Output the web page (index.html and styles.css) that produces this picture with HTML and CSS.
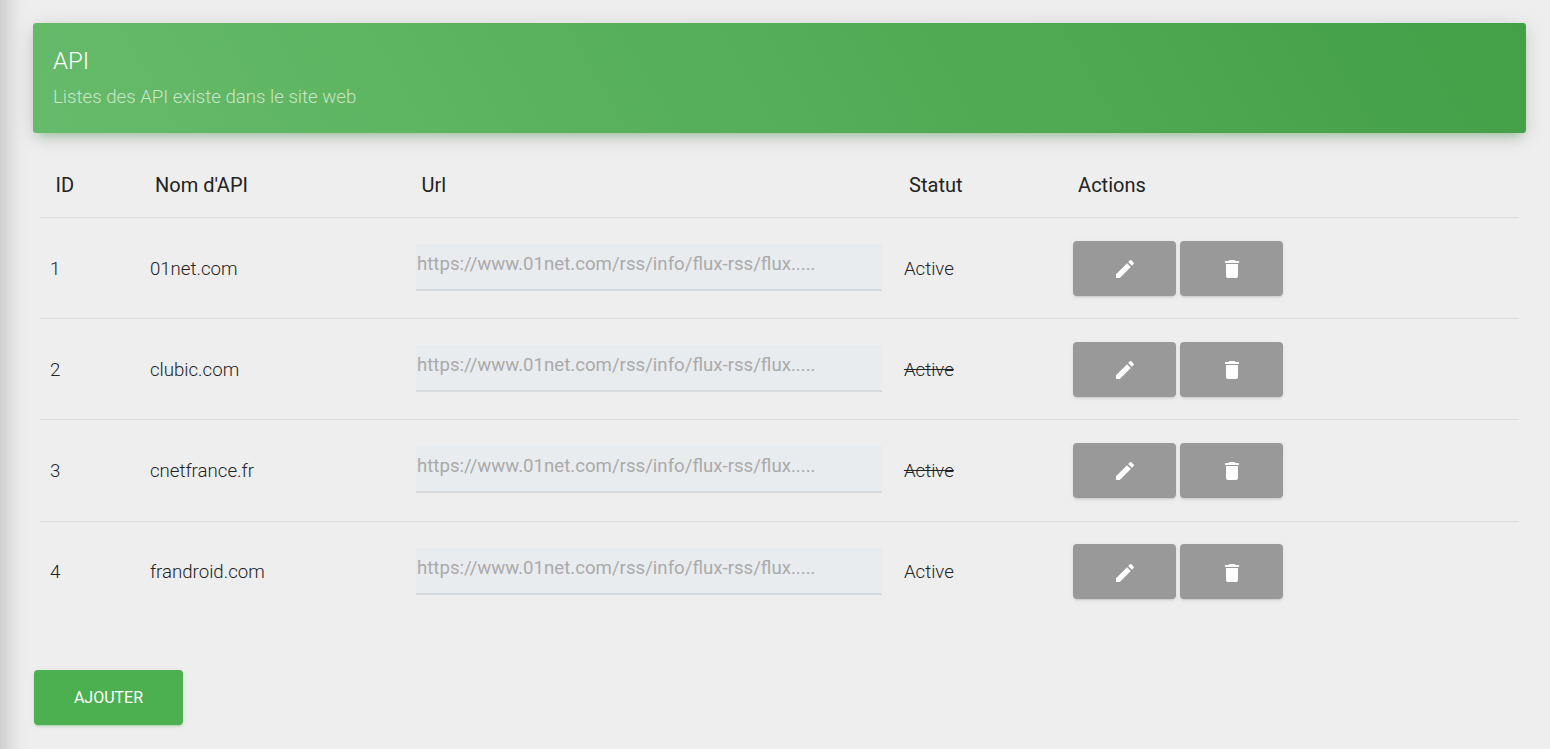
FILE: index.html
```html
<!DOCTYPE html>
<html lang="fr">
<head>
    <meta charset="UTF-8">
    <meta name="viewport" content="width=device-width, initial-scale=1.0">
    <title>API</title>
    <link rel="stylesheet" href="styles.css">
</head>
<body>
    <svg class="icon-defs" width="0" height="0" aria-hidden="true">
        <symbol id="icon-edit" viewBox="0 0 24 24"><path d="M3 17.25V21h3.75L17.81 9.94l-3.75-3.75L3 17.25zM20.71 7.04c.39-.39.39-1.02 0-1.41l-2.34-2.34c-.39-.39-1.02-.39-1.41 0l-1.83 1.83 3.75 3.75 1.83-1.83z"/></symbol>
        <symbol id="icon-delete" viewBox="0 0 24 24"><path d="M6 19c0 1.1.9 2 2 2h8c1.1 0 2-.9 2-2V7H6v12zM19 4h-3.5l-1-1h-5l-1 1H5v2h14V4z"/></symbol>
    </svg>
    <aside class="sidebar"></aside>
    <main class="content">
        <header class="card-header">
            <h1>API</h1>
            <p>Listes des API existe dans le site web</p>
        </header>
        <table class="api-table">
            <colgroup>
                <col class="col-id">
                <col class="col-name">
                <col class="col-url">
                <col class="col-status">
                <col>
            </colgroup>
            <thead>
                <tr>
                    <th>ID</th>
                    <th>Nom d'API</th>
                    <th>Url</th>
                    <th>Statut</th>
                    <th>Actions</th>
                </tr>
            </thead>
            <tbody>
                <tr>
                    <td class="cell-id">1</td>
                    <td>01net.com</td>
                    <td><input class="url-input" type="text" readonly value="https://www.01net.com/rss/info/flux-rss/flux....."></td>
                    <td>Active</td>
                    <td>
                        <div class="actions">
                            <button class="btn-action" type="button" aria-label="Modifier"><svg class="icon"><use href="#icon-edit"/></svg></button>
                            <button class="btn-action" type="button" aria-label="Supprimer"><svg class="icon"><use href="#icon-delete"/></svg></button>
                        </div>
                    </td>
                </tr>
                <tr>
                    <td class="cell-id">2</td>
                    <td>clubic.com</td>
                    <td><input class="url-input" type="text" readonly value="https://www.01net.com/rss/info/flux-rss/flux....."></td>
                    <td><s>Active</s></td>
                    <td>
                        <div class="actions">
                            <button class="btn-action" type="button" aria-label="Modifier"><svg class="icon"><use href="#icon-edit"/></svg></button>
                            <button class="btn-action" type="button" aria-label="Supprimer"><svg class="icon"><use href="#icon-delete"/></svg></button>
                        </div>
                    </td>
                </tr>
                <tr>
                    <td class="cell-id">3</td>
                    <td>cnetfrance.fr</td>
                    <td><input class="url-input" type="text" readonly value="https://www.01net.com/rss/info/flux-rss/flux....."></td>
                    <td><s>Active</s></td>
                    <td>
                        <div class="actions">
                            <button class="btn-action" type="button" aria-label="Modifier"><svg class="icon"><use href="#icon-edit"/></svg></button>
                            <button class="btn-action" type="button" aria-label="Supprimer"><svg class="icon"><use href="#icon-delete"/></svg></button>
                        </div>
                    </td>
                </tr>
                <tr>
                    <td class="cell-id">4</td>
                    <td>frandroid.com</td>
                    <td><input class="url-input" type="text" readonly value="https://www.01net.com/rss/info/flux-rss/flux....."></td>
                    <td>Active</td>
                    <td>
                        <div class="actions">
                            <button class="btn-action" type="button" aria-label="Modifier"><svg class="icon"><use href="#icon-edit"/></svg></button>
                            <button class="btn-action" type="button" aria-label="Supprimer"><svg class="icon"><use href="#icon-delete"/></svg></button>
                        </div>
                    </td>
                </tr>
            </tbody>
        </table>
        <button class="btn-add" type="button">Ajouter</button>
    </main>
</body>
</html>
```
FILE: styles.css
```css
html, body {
    height: 100%;
}
body {
    display: flex;
    margin: 0;
    overflow: hidden;
    background-color: #eeeeee;
    color: #222;
    font-family: Roboto, "Liberation Sans", sans-serif;
    font-weight: 300;
}
.icon-defs {
    position: absolute;
}
.sidebar {
    flex: 0 0 0;
    box-shadow: -34px 0 20px 40px rgba(0, 0, 0, 0.18);
}
.content {
    flex: 1;
    padding: 23px 24px 0 33px;
}
.card-header {
    box-sizing: border-box;
    height: 110px;
    padding: 24px 20px 0;
    border-radius: 3px;
    background: linear-gradient(60deg, #66bb6a, #43a047);
    box-shadow: 0 4px 20px 0 rgba(0, 0, 0, 0.14), 0 7px 10px -5px rgba(76, 175, 80, 0.4);
    color: #fff;
}
.card-header h1 {
    margin: 0;
    font-size: 24px;
    font-weight: 300;
    line-height: 28px;
}
.card-header p {
    margin: 10px 0 0;
    color: rgba(255, 255, 255, 0.66);
    font-size: 18.67px;
    line-height: 24px;
}
.api-table {
    width: 1478.6px;
    margin: 0 7px 0 7.4px;
    border-collapse: collapse;
    table-layout: fixed;
}
.col-id {
    width: 99.5px;
}
.col-name {
    width: 266.5px;
}
.col-url {
    width: 487.5px;
}
.col-status {
    width: 169px;
}
.api-table th {
    height: 84.5px;
    padding: 20px 15.2px 0;
    border-bottom: 1px solid #ddd;
    box-sizing: border-box;
    color: #222;
    font-size: 20px;
    font-weight: 400;
    text-align: left;
}
.api-table td {
    height: 101.2px;
    padding: 0.9px 10px 0;
    border-bottom: 1px solid #ddd;
    box-sizing: border-box;
    font-size: 18.67px;
}
.api-table td.cell-id {
    padding-left: 9.6px;
}
.api-table tbody tr:last-child td {
    border-bottom: none;
}
.url-input {
    display: block;
    box-sizing: border-box;
    width: 466px;
    height: 47px;
    margin-bottom: 2.3px;
    padding: 0 0 5px 0.6px;
    border: none;
    border-bottom: 2px solid #d8dadc;
    border-radius: 0;
    outline: none;
    background-color: #e9ecef;
    color: #aaa;
    font-family: inherit;
    font-size: 18.64px;
    font-weight: 400;
}
.actions {
    display: flex;
    gap: 4px;
    margin: 0 0 0.9px 0.1px;
}
.btn-action {
    display: flex;
    align-items: center;
    justify-content: center;
    width: 103px;
    height: 55px;
    padding: 2px 0 0 1px;
    border: none;
    border-radius: 4px;
    background-color: #999;
    box-shadow: 0 2px 2px 0 rgba(153, 153, 153, 0.14), 0 3px 1px -2px rgba(153, 153, 153, 0.2), 0 1px 5px 0 rgba(153, 153, 153, 0.12);
    color: #fff;
}
.icon {
    width: 24px;
    height: 24px;
    fill: currentColor;
}
.btn-add {
    display: block;
    width: 149px;
    height: 55px;
    margin: 48px 0 0 1px;
    padding: 0;
    border: none;
    border-radius: 4px;
    background-color: #4caf50;
    box-shadow: 0 2px 2px 0 rgba(76, 175, 80, 0.14), 0 3px 1px -2px rgba(76, 175, 80, 0.2), 0 1px 5px 0 rgba(76, 175, 80, 0.12);
    color: #fff;
    font-family: inherit;
    font-size: 16px;
    font-weight: 400;
    text-transform: uppercase;
}
```
